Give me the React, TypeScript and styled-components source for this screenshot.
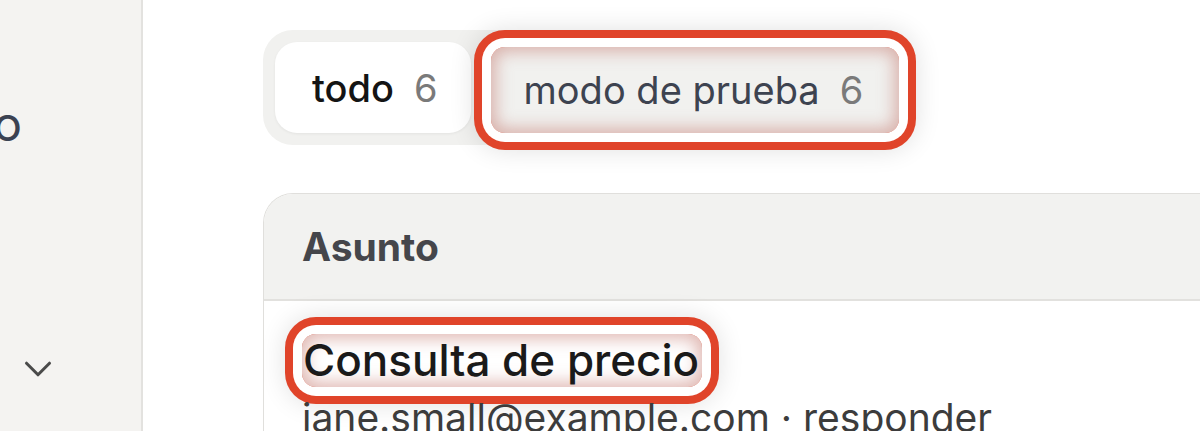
import React from "react";
import styled, { createGlobalStyle, css } from "styled-components";
import { ChevronDown } from "lucide-react";

const GlobalStyle = createGlobalStyle`
    html, body {
        margin: 0;
        padding: 0;
        background: #fff;
    }
    body {
        font-family: Inter, "Noto Sans", Arial, sans-serif;
        overflow: hidden;
    }
`;

// annotation ring drawn over marked parts (red outline, white gap, inner glow)
const highlight = css`
    box-shadow:
        inset 0 0 16px 5px rgba(196, 118, 108, 0.5),
        0 0 0 9px #fff,
        0 0 0 17px #e0442a,
        0 0 26px 17px rgba(0, 0, 0, 0.12);
`;

const Page = styled.div`
    display: flex;
    width: 1200px;
    height: 431px;
    overflow: hidden;
`;

const Sidebar = styled.aside`
    width: 143px;
    flex-shrink: 0;
    background: #f4f3f1;
    border-right: 2px solid #e3e2df;
    overflow: hidden;
    display: flex;
    flex-direction: column;
    padding-top: 96px;
    box-sizing: border-box;
`;

const NavItem = styled.div`
    width: 22px;
    display: flex;
    justify-content: flex-end;
    white-space: nowrap;
    font-size: 48px;
    line-height: 56px;
    color: #3b4252;
`;

const NavToggle = styled.div`
    margin-top: 194px;
    margin-left: 15px;
    color: #4a4a4a;
    display: flex;
`;

const Main = styled.main`
    flex: 1;
    min-width: 0;
    padding: 30px 0 0 120px;
    overflow: hidden;
`;

const TabGroup = styled.div`
    display: inline-flex;
    align-items: center;
    gap: 20px;
    padding: 12px;
    background: #f1f1ef;
    border-radius: 30px;
`;

const Tab = styled.button<{ $active?: boolean; $marked?: boolean }>`
    display: flex;
    align-items: center;
    gap: 20px;
    height: ${(p) => (p.$marked ? "86px" : "91px")};
    margin-top: ${(p) => (p.$marked ? "5px" : "0")};
    padding: 0 ${(p) => (p.$marked ? "36px" : "33px")} 0 ${(p) => (p.$marked ? "33px" : "37px")};
    border: none;
    border-radius: ${(p) => (p.$marked ? "14px" : "22px")};
    background: ${(p) => (p.$active ? "#fff" : "transparent")};
    color: ${(p) => (p.$active ? "#141414" : "#3d4350")};
    font-family: Inter, "Noto Sans", Arial, sans-serif;
    font-size: 38px;
    font-weight: ${(p) => (p.$active ? 500 : 400)};
    ${(p) => p.$active && "box-shadow: 0 1px 3px rgba(0, 0, 0, 0.06);"}
    ${(p) => p.$marked && highlight}
`;

const Count = styled.span`
    color: #7a7a7a;
    font-weight: 400;
`;

const Card = styled.section`
    margin-top: 48px;
    border: 1px solid #e0dfdc;
    border-right: none;
    border-radius: 30px 0 0 0;
    overflow: hidden;
`;

const HeaderRow = styled.div`
    height: 105px;
    display: flex;
    align-items: center;
    padding-left: 38px;
    background: #f2f2f0;
    border-bottom: 2px solid #e2e1de;
`;

const HeaderCell = styled.span`
    font-size: 39px;
    font-weight: 700;
    color: #45464b;
`;

const BodyRow = styled.div`
    padding: 33px 38px;
    background: #fff;
`;

const Subject = styled.span`
    display: inline-block;
    padding: 0 3px 0 1px;
    font-size: 44px;
    line-height: 53px;
    font-weight: 500;
    color: #1a1a1a;
    border-radius: 14px;
    ${highlight}
`;

const Meta = styled.div`
    margin-top: 7px;
    font-size: 39px;
    line-height: 48px;
    color: #3c3c3c;
`;

export default function App() {
    return (
        <>
            <GlobalStyle />
            <Page>
                <Sidebar>
                    <NavItem>Registro</NavItem>
                    <NavToggle>
                        <ChevronDown size={46} strokeWidth={1.6} />
                    </NavToggle>
                </Sidebar>
                <Main>
                    <TabGroup>
                        <Tab $active>
                            todo <Count>6</Count>
                        </Tab>
                        <Tab $marked>
                            modo de prueba <Count>6</Count>
                        </Tab>
                    </TabGroup>
                    <Card>
                        <HeaderRow>
                            <HeaderCell>Asunto</HeaderCell>
                        </HeaderRow>
                        <BodyRow>
                            <Subject>Consulta de precio</Subject>
                            <Meta>jane.small@example.com · responder</Meta>
                        </BodyRow>
                    </Card>
                </Main>
            </Page>
        </>
    );
}
